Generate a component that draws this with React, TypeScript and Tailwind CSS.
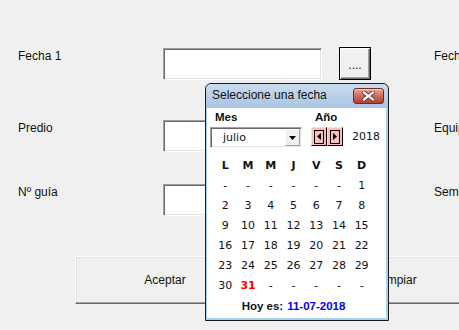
import React from "react";

const sunken =
  "bg-white border border-t-[#a0a0a0] border-l-[#a0a0a0] border-r-white border-b-white shadow-[inset_1px_1px_0_#696969,inset_-1px_-1px_0_#e3e3e3]";

const lib = { fontFamily: '"Liberation Sans", Arial, sans-serif' };

function TextBox({ w }: { w: string }) {
  return <div className={`${w} h-[32px] ${sunken}`} />;
}

const days: (string | number)[][] = [
  ["-", "-", "-", "-", "-", "-", 1],
  [2, 3, 4, 5, 6, 7, 8],
  [9, 10, 11, 12, 13, 14, 15],
  [16, 17, 18, 19, 20, 21, 22],
  [23, 24, 25, 26, 27, 28, 29],
  [30, 31, "-", "-", "-", "-", "-"],
];

function Calendar() {
  return (
    <div
      className="absolute left-[205px] top-[83px] w-[184px] h-[238px] border border-[#1a1a1a] rounded-t-[6px] bg-[#a8d2ee] flex flex-col overflow-hidden"
      style={{ fontFamily: '"DejaVu Sans", Verdana, sans-serif' }}
    >
      <div className="h-[24px] shrink-0 flex items-start bg-gradient-to-b from-[#c9dbef] to-[#a9c4e3] rounded-t-[5px]">
        <span className="pl-[6px] pt-[4px] text-[12px] leading-[15px] text-[#111]" style={lib}>
          Seleccione una fecha
        </span>
        <div className="ml-auto mr-[4px] mt-[4px] w-[31px] h-[16px] rounded-[3px] border border-[#6f2a22] bg-gradient-to-b from-[#e7a79c] via-[#cf6a5c] to-[#b63d2f] flex items-center justify-center shadow-[inset_0_1px_0_#f3c9c1]">
          <svg width="13" height="10" viewBox="0 0 13 10">
            <path d="M2 1.5 L11 8.5 M11 1.5 L2 8.5" stroke="#5a4040" strokeWidth="4" strokeLinecap="square" />
            <path d="M2 1.5 L11 8.5 M11 1.5 L2 8.5" stroke="#ffffff" strokeWidth="2.2" strokeLinecap="square" />
          </svg>
        </div>
      </div>
      <div className="flex-1 ml-[1px] mr-[2px] mb-[2px] bg-white flex flex-col text-[11px] text-[#111]">
        <div className="flex pl-[8px] pt-[2px] h-[19px] font-bold text-[11.5px]" style={lib}>
          <span className="w-[100px]">Mes</span>
          <span>Año</span>
        </div>
        <div className="flex items-start pl-[3px]">
          <div className={`w-[92px] h-[21px] ${sunken} flex items-center`}>
            <span className="pl-[12px] flex-1">julio</span>
            <div className="w-[15px] h-[17px] mr-[1px] bg-[#f0f0f0] border border-t-white border-l-white border-r-[#a0a0a0] border-b-[#a0a0a0] flex items-center justify-center">
              <svg width="7" height="4" viewBox="0 0 7 4">
                <path d="M0 0 H7 L3.5 4 Z" fill="#000" />
              </svg>
            </div>
          </div>
          <div className="ml-[9px] flex">
            {["L", "R"].map((d) => (
              <div
                key={d}
                className="w-[16px] h-[19px] bg-[#f7c0bf] border border-t-[#fbdede] border-l-[#fbdede] border-r-black border-b-black flex items-center justify-center"
              >
                <div className="w-[10px] h-[14px] border border-black flex items-center justify-center">
                  <svg width="4" height="7" viewBox="0 0 4 7">
                    <path d={d === "L" ? "M4 0 V7 L0 3.5 Z" : "M0 0 V7 L4 3.5 Z"} fill="#000" />
                  </svg>
                </div>
              </div>
            ))}
          </div>
          <span className="ml-[9px] leading-[19px]">2018</span>
        </div>
        <div className="mt-[8px] ml-[7px] w-[159px] grid grid-cols-7">
          {["L", "M", "M", "J", "V", "S", "D"].map((h, i) => (
            <div key={i} className="h-[20px] flex items-center justify-center font-bold">
              {h}
            </div>
          ))}
          {days.flat().map((d, i) => (
            <div
              key={i}
              className={`h-[20px] flex items-center justify-center ${d === 31 ? "text-[#ff0000] font-bold" : ""}`}
            >
              {d}
            </div>
          ))}
        </div>
        <div className="ml-[7px] w-[159px] h-[20px] flex items-center justify-center font-bold text-[11.5px]" style={lib}>
          <span>Hoy es:</span>
          <span className="ml-[4px] text-[#0000ff]">11-07-2018</span>
        </div>
      </div>
    </div>
  );
}

export default function App() {
  return (
    <div
      className="relative w-[459px] h-[330px] bg-[#f0f0f0] overflow-hidden text-[12px] leading-[14px] text-[#111]"
      style={lib}
    >
      <div className="pt-[48px] flex flex-col w-[560px]">
        <div className="flex items-start h-[32px]">
          <span className="w-[163px] pl-[18px] pt-px">Fecha 1</span>
          <TextBox w="w-[159px]" />
          <div className="ml-[17px] -mt-px w-[32px] h-[33px] border border-black bg-[#f0f0f0] shadow-[inset_1px_1px_0_#fff,inset_-1px_-1px_0_#696969,inset_-2px_-2px_0_#a0a0a0] flex items-end justify-center pb-[7px]">
            ....
          </div>
          <span className="ml-[63px] pt-px">Fecha</span>
        </div>
        <div className="flex items-start h-[32px] mt-[40px]">
          <span className="w-[163px] pl-[18px] pt-px">Predio</span>
          <TextBox w="w-[159px]" />
          <span className="ml-[112px] pt-px">Equipo</span>
        </div>
        <div className="flex items-start h-[32px] mt-[32px]">
          <span className="w-[163px] pl-[18px] pt-px">Nº guía</span>
          <TextBox w="w-[159px]" />
          <span className="ml-[112px] pt-px">Semana</span>
        </div>
        <div className="flex mt-[40px] pl-[75px]">
          <div className="w-[180px] h-[48px] border border-t-white border-l-white border-r-[#696969] border-b-[#696969] shadow-[inset_-1px_-1px_0_#a0a0a0,inset_1px_1px_0_#e3e3e3] flex items-center justify-center">
            Aceptar
          </div>
          <div className="ml-[52px] w-[180px] h-[48px] border border-t-white border-l-white border-r-[#696969] border-b-[#696969] shadow-[inset_-1px_-1px_0_#a0a0a0,inset_1px_1px_0_#e3e3e3] flex items-center justify-center">
            Limpiar
          </div>
        </div>
      </div>
      <Calendar />
    </div>
  );
}
